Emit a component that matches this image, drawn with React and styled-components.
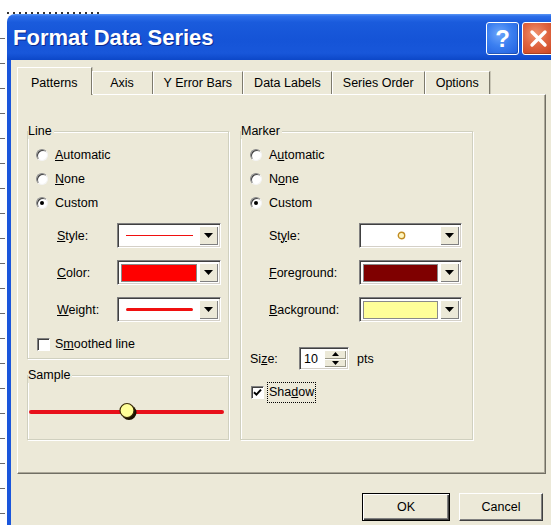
import React from 'react';
import styled, { createGlobalStyle } from 'styled-components';

const GlobalStyle = createGlobalStyle`
  html, body {
    margin: 0;
    padding: 0;
    background: #fff;
    overflow: hidden;
  }
  body {
    font-family: "Liberation Sans", Arial, sans-serif;
    font-size: 12.5px;
    color: #000;
  }
`;

const FACE = '#ECE9D8';

const Screen = styled.div`
  width: 551px;
  height: 525px;
  overflow: hidden;
  display: grid;
  grid-template-columns: 7px 1fr;
  grid-template-rows: 14px 1fr;
`;

// bottom of the sheet text peeking over the dialog
const TopStrip = styled.div`
  grid-column: 1 / 3;
  display: flex;
  align-items: flex-end;
  padding-left: 7px;
`;

const CutText = styled.div`
  width: 96px;
  height: 2px;
  background: repeating-linear-gradient(90deg, #333 0 2px, transparent 2px 6px);
`;

// worksheet gridlines on the left of the dialog
const Gutter = styled.div`
  background: repeating-linear-gradient(to bottom, transparent 0 24px, #6b6b6b 24px 25px);
  background-size: 5px 100%;
  background-repeat: no-repeat;
`;

const Dialog = styled.div`
  width: 560px;
  display: flex;
  flex-direction: column;
  border-top-left-radius: 8px;
  overflow: hidden;
`;

const TitleBar = styled.div`
  height: 46px;
  display: flex;
  align-items: center;
  gap: 3px;
  padding: 0 12px 0 6px;
  background: linear-gradient(
    to bottom,
    #5a96f5 0%,
    #2c6ee9 5%,
    #1a5bdc 18%,
    #1554d7 55%,
    #1857da 85%,
    #0c47c8 100%
  );
`;

const Title = styled.div`
  flex: 1;
  font: bold 22px "Liberation Sans", Arial, sans-serif;
  color: #fff;
  text-shadow: 1px 1px 0 #0a2a90;
  margin-top: 1px;
`;

const CaptionButton = styled.div`
  width: 33px;
  height: 33px;
  box-sizing: border-box;
  border: 1px solid #fff;
  border-radius: 3px;
  margin-top: 3px;
  display: flex;
  align-items: center;
  justify-content: center;
  color: #fff;
  font: bold 24px "Liberation Sans", Arial, sans-serif;
  background: ${(p) =>
    p.$close
      ? 'radial-gradient(circle at 40% 35%, #f0936f 0%, #df6440 45%, #c8421c 100%)'
      : 'radial-gradient(circle at 40% 35%, #6ea6fb 0%, #3b7ff0 45%, #205fe0 100%)'};
  box-shadow: inset -1px -1px 0 rgba(0, 0, 0, 0.2);
`;

const Body = styled.div`
  flex: 1;
  background: ${FACE};
  border-left: 4px solid #1a56dc;
  padding: 7px 0 0 6px;
`;

const TabStrip = styled.div`
  display: flex;
  align-items: flex-end;
  height: 27px;
  position: relative;
  z-index: 1;
`;

const Tab = styled.div`
  box-sizing: border-box;
  height: ${(p) => (p.$active ? 28 : 23)}px;
  margin-bottom: ${(p) => (p.$active ? -1 : 0)}px;
  padding: ${(p) => (p.$active ? '4px 13px 1px' : '0 10px')};
  min-width: ${(p) => (p.$min ? `${p.$min}px` : 'auto')};
  display: flex;
  align-items: center;
  justify-content: center;
  background: ${FACE};
  border-top: 1px solid #fff;
  border-left: 1px solid #fff;
  border-right: 1px solid #7d7a6c;
  box-shadow: 1px 0 0 #c9c6b6;
  white-space: nowrap;
`;

const Panel = styled.div`
  box-sizing: border-box;
  width: 529px;
  height: 380px;
  border-top: 1px solid #fff;
  border-left: 1px solid #fff;
  border-right: 1px solid #716f64;
  border-bottom: 1px solid #716f64;
  box-shadow: inset -1px -1px 0 #aca899;
  padding: 29px 0 0 9px;
`;

const Columns = styled.div`
  display: flex;
  gap: 11px;
  align-items: stretch;
`;

const LeftColumn = styled.div`
  width: 202px;
  display: flex;
  flex-direction: column;
  gap: 9px;
`;

const Group = styled.fieldset`
  margin: 0;
  padding: 0;
  min-width: 0;
  width: ${(p) => p.$width}px;
  box-sizing: border-box;
  border: 1px solid #d0d0bf;
  box-shadow: inset 1px 1px 0 #fff, 1px 1px 0 #fff;
`;

const Legend = styled.legend`
  padding: 0 2px 0 0;
  line-height: 15px;
  background: ${FACE};
`;

const GroupBody = styled.div`
  padding: ${(p) => p.$pad};
  display: flex;
  flex-direction: column;
`;

const OptionRow = styled.div`
  height: 24px;
  display: flex;
  align-items: center;
  gap: 7px;
`;

const Radio = styled.span`
  width: 12px;
  height: 12px;
  box-sizing: border-box;
  border-radius: 50%;
  border: 1px solid;
  border-color: #8a8a8a #f4f4f4 #f4f4f4 #8a8a8a;
  background: #fff;
  box-shadow: inset 1px 1px 0 #404040;
  display: flex;
  align-items: center;
  justify-content: center;

  &::after {
    content: '';
    width: 4px;
    height: 4px;
    border-radius: 50%;
    background: ${(p) => (p.$checked ? '#000' : 'transparent')};
  }
`;

const FormRows = styled.div`
  margin-top: 8px;
  display: flex;
  flex-direction: column;
  gap: 12px;
`;

const FormRow = styled.div`
  height: 25px;
  display: flex;
  align-items: center;
  padding-left: ${(p) => p.$indent}px;
`;

const FieldLabel = styled.span`
  width: ${(p) => p.$width}px;
  flex-shrink: 0;
`;

const Combo = styled.div`
  width: ${(p) => p.$width}px;
  height: 25px;
  box-sizing: border-box;
  display: flex;
  border: 1px solid;
  border-color: #808080 #fff #fff #808080;
  box-shadow: inset 1px 1px 0 #404040, inset -1px -1px 0 #d4d0c8;
  padding: 2px;
  background: #fff;
`;

const ComboField = styled.div`
  flex: 1;
  display: flex;
  align-items: center;
  justify-content: center;
  padding: ${(p) => p.$pad || '0 6px'};
`;

const DropButton = styled.div`
  width: 19px;
  background: ${FACE};
  box-shadow: inset 1px 1px 0 #fff, inset -1px -1px 0 #808080;
  display: flex;
  align-items: center;
  justify-content: center;
`;

// line style preview: a solid red rule of the given weight
const Stroke = styled.div`
  flex: 1;
  height: 0;
  border-top: ${(p) => p.$size}px solid #f01010;
  border-radius: ${(p) => (p.$size > 1 ? p.$size / 2 : 0)}px;
`;

const Swatch = styled.div`
  flex: 1;
  align-self: stretch;
  background: ${(p) => p.$color};
  border: 1px solid #8a8a8a;
`;

const CheckRow = styled.div`
  height: ${(p) => p.$height}px;
  margin-top: ${(p) => p.$top}px;
  display: flex;
  align-items: center;
  gap: ${(p) => p.$gap}px;
  padding-left: 1px;
`;

const CheckBox = styled.span`
  width: 13px;
  height: 13px;
  box-sizing: border-box;
  border: 1px solid;
  border-color: #808080 #fff #fff #808080;
  box-shadow: inset 1px 1px 0 #404040;
  background: #fff;
  display: flex;
  align-items: center;
  justify-content: center;
`;

const FocusLabel = styled.span`
  outline: 1px dotted #000;
  outline-offset: 0;
  padding: 2px 1px;
  line-height: 15px;
`;

const SizeRow = styled.div`
  margin-top: 25px;
  height: 23px;
  display: flex;
  align-items: center;
`;

const Spin = styled.div`
  width: 50px;
  height: 23px;
  box-sizing: border-box;
  display: flex;
  border: 1px solid;
  border-color: #808080 #fff #fff #808080;
  box-shadow: inset 1px 1px 0 #404040, inset -1px -1px 0 #d4d0c8;
  padding: 2px;
  background: #fff;
`;

const SpinValue = styled.span`
  flex: 1;
  padding-left: 2px;
  display: flex;
  align-items: center;
`;

const SpinButtons = styled.div`
  width: 22px;
  display: flex;
  flex-direction: column;
`;

const SpinButton = styled.div`
  flex: 1;
  background: ${FACE};
  box-shadow: inset 1px 1px 0 #fff, inset -1px -1px 0 #9a9888;
  display: flex;
  align-items: center;
  justify-content: center;
`;

const Unit = styled.span`
  margin-left: 8px;
`;

const SampleArt = styled.svg`
  display: block;
`;

const ButtonRow = styled.div`
  width: 529px;
  box-sizing: border-box;
  display: flex;
  justify-content: flex-end;
  gap: 9px;
  padding: 19px 3px 0 0;
`;

const PushButton = styled.div`
  width: ${(p) => p.$width}px;
  height: 28px;
  box-sizing: border-box;
  display: flex;
  align-items: center;
  justify-content: center;
  background: ${FACE};
  border: 1px solid;
  border-color: ${(p) => (p.$default ? '#000' : '#fff #404040 #404040 #fff')};
  box-shadow: ${(p) =>
    p.$default
      ? 'inset 1px 1px 0 #fff, inset -1px -1px 0 #404040, inset -2px -2px 0 #808080'
      : 'inset -1px -1px 0 #808080'};
`;

const ArrowDown = ({ w = 9, h = 5 }) => (
  <svg width={w} height={h} viewBox={`0 0 ${w} ${h}`}>
    <polygon points={`0,0 ${w},0 ${w / 2},${h}`} fill="#000" />
  </svg>
);

const ArrowUp = ({ w = 7, h = 4 }) => (
  <svg width={w} height={h} viewBox={`0 0 ${w} ${h}`}>
    <polygon points={`0,${h} ${w},${h} ${w / 2},0`} fill="#000" />
  </svg>
);

const Dropdown = ({ width, pad, children }) => (
  <Combo $width={width}>
    <ComboField $pad={pad}>{children}</ComboField>
    <DropButton>
      <ArrowDown />
    </DropButton>
  </Combo>
);

const Option = ({ checked, children }) => (
  <OptionRow>
    <Radio $checked={checked} />
    <span>{children}</span>
  </OptionRow>
);

const tabs = [
  { label: 'Patterns', active: true },
  { label: 'Axis', min: 61 },
  { label: 'Y Error Bars' },
  { label: 'Data Labels' },
  { label: 'Series Order' },
  { label: 'Options' },
];

export default function App() {
  return (
    <>
      <GlobalStyle />
      <Screen>
        <TopStrip>
          <CutText />
        </TopStrip>
        <Gutter />
        <Dialog>
          <TitleBar>
            <Title>Format Data Series</Title>
            <CaptionButton>?</CaptionButton>
            <CaptionButton $close>
              <svg width="19" height="19" viewBox="0 0 19 19">
                <path
                  d="M3 3 L16 16 M16 3 L3 16"
                  stroke="#fff"
                  strokeWidth="3.4"
                  strokeLinecap="round"
                />
              </svg>
            </CaptionButton>
          </TitleBar>

          <Body>
            <TabStrip>
              {tabs.map((t) => (
                <Tab key={t.label} $active={t.active} $min={t.min}>
                  {t.label}
                </Tab>
              ))}
            </TabStrip>

            <Panel>
              <Columns>
                <LeftColumn>
                  <Group $width={202}>
                    <Legend>Line</Legend>
                    <GroupBody $pad="4px 0 6px 8px">
                      <Option>
                        <u>A</u>utomatic
                      </Option>
                      <Option>
                        <u>N</u>one
                      </Option>
                      <Option checked>Custom</Option>

                      <FormRows>
                        <FormRow $indent={21}>
                          <FieldLabel $width={60}>
                            <u>S</u>tyle:
                          </FieldLabel>
                          <Dropdown width={104}>
                            <Stroke $size={1} />
                          </Dropdown>
                        </FormRow>
                        <FormRow $indent={21}>
                          <FieldLabel $width={60}>
                            <u>C</u>olor:
                          </FieldLabel>
                          <Dropdown width={104} pad="1px 2px 0 1px">
                            <Swatch $color="#ff0000" />
                          </Dropdown>
                        </FormRow>
                        <FormRow $indent={21}>
                          <FieldLabel $width={60}>
                            <u>W</u>eight:
                          </FieldLabel>
                          <Dropdown width={104}>
                            <Stroke $size={3} />
                          </Dropdown>
                        </FormRow>
                      </FormRows>

                      <CheckRow $height={16} $top={14} $gap={5}>
                        <CheckBox />
                        <span>
                          S<u>m</u>oothed line
                        </span>
                      </CheckRow>
                    </GroupBody>
                  </Group>

                  <Group $width={202}>
                    <Legend>Sample</Legend>
                    <GroupBody $pad="0 0 6px 0">
                      <SampleArt width="200" height="50" viewBox="0 0 200 50">
                        <line
                          x1="3"
                          y1="29"
                          x2="194"
                          y2="29"
                          stroke="#e8101a"
                          strokeWidth="4"
                          strokeLinecap="round"
                        />
                        <circle cx="101" cy="29.5" r="7.5" fill="#1a1200" />
                        <circle
                          cx="99"
                          cy="27.5"
                          r="7"
                          fill="#ffff99"
                          stroke="#3a2c08"
                          strokeWidth="1.2"
                        />
                      </SampleArt>
                    </GroupBody>
                  </Group>
                </LeftColumn>

                <Group $width={233}>
                  <Legend>Marker</Legend>
                  <GroupBody $pad="4px 0 0 9px">
                    <Option>
                      A<u>u</u>tomatic
                    </Option>
                    <Option>
                      N<u>o</u>ne
                    </Option>
                    <Option checked>Custom</Option>

                    <FormRows>
                      <FormRow $indent={19}>
                        <FieldLabel $width={90}>
                          St<u>y</u>le:
                        </FieldLabel>
                        <Dropdown width={103}>
                          <svg width="9" height="9" viewBox="0 0 9 9">
                            <circle
                              cx="4.5"
                              cy="4.5"
                              r="3.2"
                              fill="#fff6c0"
                              stroke="#c08a20"
                              strokeWidth="1.4"
                            />
                          </svg>
                        </Dropdown>
                      </FormRow>
                      <FormRow $indent={19}>
                        <FieldLabel $width={90}>
                          <u>F</u>oreground:
                        </FieldLabel>
                        <Dropdown width={103} pad="1px 2px 0 1px">
                          <Swatch $color="#7f0000" />
                        </Dropdown>
                      </FormRow>
                      <FormRow $indent={19}>
                        <FieldLabel $width={90}>
                          <u>B</u>ackground:
                        </FieldLabel>
                        <Dropdown width={103} pad="1px 2px 0 1px">
                          <Swatch $color="#ffff99" />
                        </Dropdown>
                      </FormRow>
                    </FormRows>

                    <SizeRow>
                      <FieldLabel $width={49}>
                        Si<u>z</u>e:
                      </FieldLabel>
                      <Spin>
                        <SpinValue>10</SpinValue>
                        <SpinButtons>
                          <SpinButton>
                            <ArrowUp />
                          </SpinButton>
                          <SpinButton>
                            <ArrowDown w={7} h={4} />
                          </SpinButton>
                        </SpinButtons>
                      </Spin>
                      <Unit>pts</Unit>
                    </SizeRow>

                    <CheckRow $height={20} $top={12} $gap={4}>
                      <CheckBox>
                        <svg width="9" height="9" viewBox="0 0 9 9">
                          <path
                            d="M1 4.2 L3.4 6.6 L8 1.6"
                            fill="none"
                            stroke="#000"
                            strokeWidth="2"
                          />
                        </svg>
                      </CheckBox>
                      <FocusLabel>
                        Sha<u>d</u>ow
                      </FocusLabel>
                    </CheckRow>
                  </GroupBody>
                </Group>
              </Columns>
            </Panel>

            <ButtonRow>
              <PushButton $width={88} $default>
                OK
              </PushButton>
              <PushButton $width={84}>Cancel</PushButton>
            </ButtonRow>
          </Body>
        </Dialog>
      </Screen>
    </>
  );
}
